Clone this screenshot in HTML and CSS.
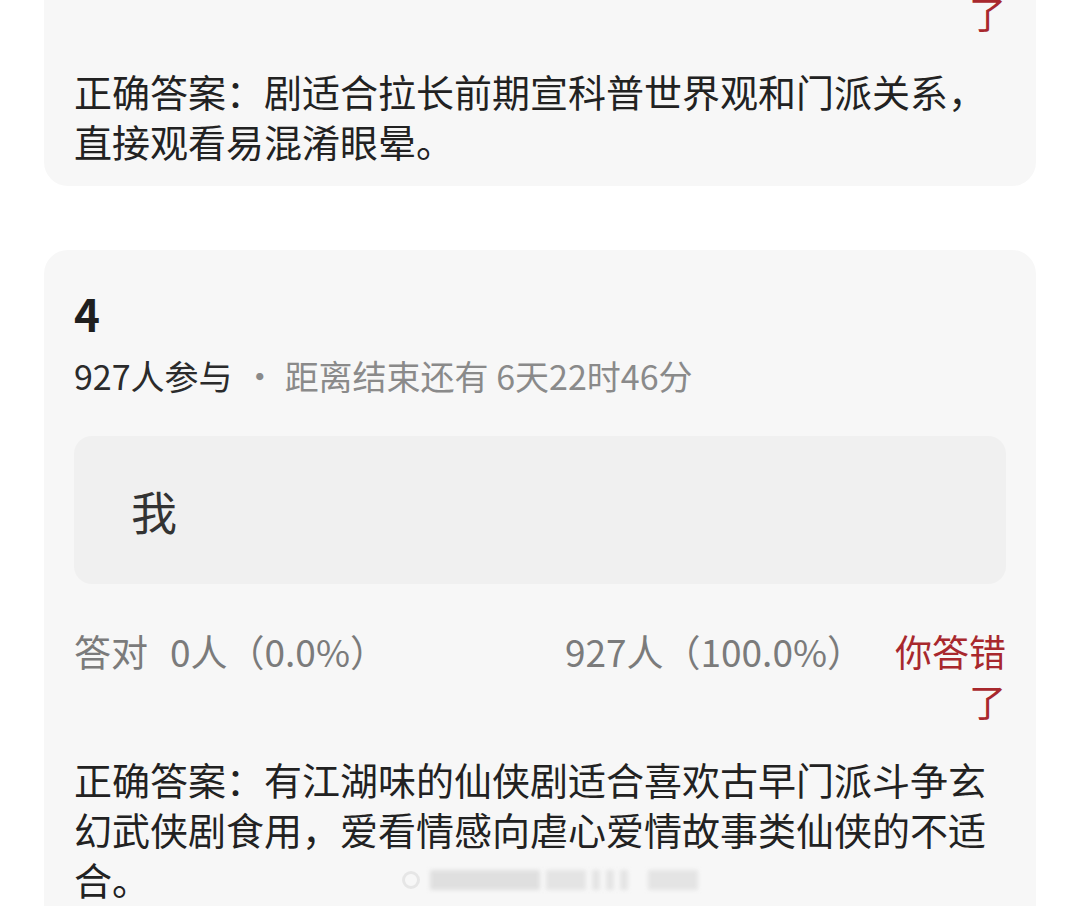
FILE: index.html
```html
<!DOCTYPE html>
<html lang="zh-CN">
<head>
<meta charset="utf-8">
<title>答题结果</title>
<link rel="stylesheet" href="styles.css">
</head>
<body>
<div class="page">
  <section class="card card-prev">
    <div class="tail">了</div>
    <p class="answer">正确答案：剧适合拉长前期宣科普世界观和门派关系，直接观看易混淆眼晕。</p>
  </section>

  <section class="card card-q">
    <div class="qnum">4</div>
    <div class="meta"><span class="meta-count">927人参与</span><span class="meta-sep">·</span><span class="meta-time">距离结束还有 6天22时46分</span></div>
    <div class="option"><span class="option-text">我</span></div>
    <div class="stats">
      <div class="stat-left"><span>答对</span><span class="stat-num">0人（0.0%）</span></div>
      <div class="stat-mid">927人（100.0%）</div>
      <div class="stat-wrong">你答错了</div>
    </div>
    <p class="answer">正确答案：有江湖味的仙侠剧适合喜欢古早门派斗争玄幻武侠剧食用，爱看情感向虐心爱情故事类仙侠的不适合。</p>
  </section>
</div>
<div class="watermark" aria-hidden="true">
  <span class="wm-ring"></span>
  <span class="wm-bar wm-long"></span>
  <span class="wm-bar wm-mid"></span>
  <span class="wm-bar wm-thin"></span>
  <span class="wm-bar wm-thin"></span>
  <span class="wm-bar wm-thin"></span>
  <span class="wm-bar wm-short"></span>
</div>
</body>
</html>
```
FILE: styles.css
```css
html, body {
  margin: 0;
  padding: 0;
  background: #ffffff;
}
body {
  width: 1080px;
  height: 906px;
  overflow: hidden;
  position: relative;
  font-family: "Noto Sans CJK SC", "Noto Sans", sans-serif;
  color: #222222;
}
.page {
  display: flex;
  flex-direction: column;
  padding: 0 44px;
}
.card {
  background: #f7f7f7;
  border-radius: 24px;
  padding: 0 30px;
}
.card-prev {
  margin-top: -12px;
  padding-bottom: 20px;
  border-radius: 0 0 24px 24px;
}
.tail {
  font-size: 37px;
  line-height: 50px;
  color: #a8282d;
  text-align: right;
}
.answer {
  margin: 28px 0 0;
  font-size: 38px;
  line-height: 50px;
  color: #222222;
}
.card-q {
  margin-top: 64px;
  padding-top: 37px;
  padding-bottom: 40px;
}
.qnum {
  font-size: 44px;
  line-height: 52px;
  font-weight: 700;
  color: #1f1f1f;
}
.meta {
  margin-top: 12px;
  font-size: 34px;
  line-height: 50px;
  color: #8a8a8a;
}
.meta-count {
  color: #2b2b2b;
}
.meta-sep {
  margin: 0 8px 0 10px;
}
.option {
  margin-top: 35px;
  height: 148px;
  background: #f0f0f0;
  border-radius: 18px;
  display: flex;
  align-items: center;
  padding-left: 57px;
}
.option-text {
  font-size: 46px;
  color: #333333;
}
.stats {
  margin-top: 42px;
  display: grid;
  grid-template-columns: 1fr auto 112px;
  column-gap: 30px;
  font-size: 37px;
  line-height: 50px;
  color: #7b7b7b;
}
.stat-num {
  margin-left: 22px;
}
.stat-wrong {
  color: #a8282d;
  text-align: right;
}
.watermark {
  position: absolute;
  left: 402px;
  top: 868px;
  display: flex;
  align-items: center;
  gap: 6px;
  height: 24px;
  opacity: 0.6;
}
.wm-ring {
  width: 18px;
  height: 18px;
  border-radius: 50%;
  border: 3px solid #dcdcdc;
  box-sizing: border-box;
  margin-right: 4px;
}
.wm-bar {
  display: block;
  height: 20px;
  background: #d8d8d8;
  filter: blur(2px);
}
.wm-long {
  width: 110px;
  background: #d0d0d0;
}
.wm-mid {
  width: 40px;
}
.wm-thin {
  width: 8px;
}
.wm-short {
  width: 50px;
  margin-left: 14px;
}
```
